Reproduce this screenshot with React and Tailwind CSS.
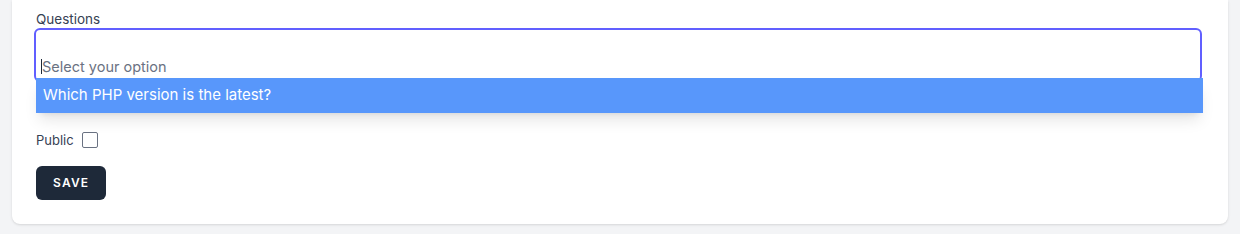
export default function App() {
  return (
    <div className="h-[234px] bg-gray-100 px-3 font-['Inter',sans-serif]">
      <div className="rounded-b-lg bg-white px-6 pt-[10px] pb-6 shadow-sm">
        <label className="block text-[13.5px] leading-[18px] text-gray-700">Questions</label>

        <div className="relative -ml-[2px] mr-[2px] h-[54px] rounded-md border-2 border-indigo-500 bg-white">
          <div className="relative pt-[27px] pl-[6px] text-[14.5px] leading-5 text-gray-500">
            <span className="absolute left-[5px] top-[29px] h-[15px] w-px bg-gray-800" />
            Select your option
          </div>
          <ul className="absolute left-0 right-[-3px] top-[48px] z-10 shadow-lg">
            <li className="flex h-[35px] items-center bg-[#5897fb] px-[7px] text-[15px] text-white">
              Which PHP version is the latest?
            </li>
          </ul>
        </div>

        <div className="mt-[48px] flex items-center gap-2 text-[13px] leading-5 text-gray-700">
          <span>Public</span>
          <span className="h-4 w-4 rounded-[2px] border border-gray-500 bg-white" />
        </div>

        <button className="mt-4 inline-flex items-center rounded-md border border-transparent bg-gray-800 px-4 py-2 text-xs leading-4 font-semibold tracking-widest text-white uppercase">
          Save
        </button>
      </div>
    </div>
  );
}
